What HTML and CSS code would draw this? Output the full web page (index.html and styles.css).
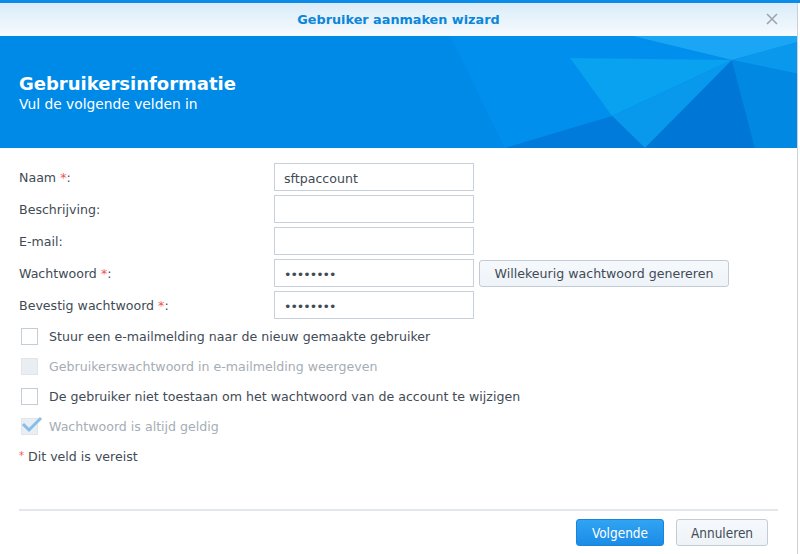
FILE: index.html
```html
<!DOCTYPE html>
<html lang="nl">
  <head>
    <meta charset="UTF-8" />
    <meta name="viewport" content="width=device-width, initial-scale=1.0" />
    <title>Gebruiker aanmaken wizard</title>
    <link rel="stylesheet" href="styles.css">
  </head>

  <body>
    <div class="window">
      <!-- balk bovenaan + titel -->
      <header class="titlebar">
        <span class="title">Gebruiker aanmaken wizard</span>
        <button class="close" type="button" aria-label="Sluiten">
          <svg width="12" height="12" viewBox="0 0 12 12">
            <path d="M1 1 L11 11 M11 1 L1 11" stroke="#9ea4aa" stroke-width="1.6" fill="none" />
          </svg>
        </button>
      </header>

      <section class="banner">
        <svg class="banner-bg" width="798" height="112" viewBox="0 0 798 112" preserveAspectRatio="none">
          <rect width="798" height="112" fill="#008ae8" />
          <polygon points="450,0 633,0 732,24 612,80 645,112 505,112" fill="#008fec" />
          <polygon points="633,0 798,0 798,6 732,24" fill="#1aa6f5" />
          <polygon points="570,22 732,24 612,80" fill="#08a2f1" />
          <polygon points="612,80 732,24 645,112" fill="#0898ec" />
          <polygon points="505,112 612,80 645,112" fill="#007bdb" />
          <polygon points="645,112 732,24 755,112" fill="#0077d6" />
          <polygon points="732,24 798,6 798,38" fill="#0a98ec" />
          <polygon points="732,24 798,38 798,112 755,112" fill="#0088e2" />
        </svg>
        <h1>Gebruikersinformatie</h1>
        <p>Vul de volgende velden in</p>
      </section>

      <main class="form">
        <div class="fields">
          <label for="naam">Naam <span class="req">*</span>:</label>
          <input id="naam" type="text" value="sftpaccount" />
          <span></span>

          <label for="beschrijving">Beschrijving:</label>
          <input id="beschrijving" type="text" />
          <span></span>

          <label for="email">E-mail:</label>
          <input id="email" type="text" />
          <span></span>

          <label for="ww">Wachtwoord <span class="req">*</span>:</label>
          <input id="ww" type="password" value="12345678" />
          <button class="btn" type="button">Willekeurig wachtwoord genereren</button>

          <label for="ww2">Bevestig wachtwoord <span class="req">*</span>:</label>
          <input id="ww2" type="password" value="12345678" />
          <span></span>
        </div>

        <ul class="checks">
          <li><span class="box"></span>Stuur een e-mailmelding naar de nieuw gemaakte gebruiker</li>
          <li class="disabled"><span class="box"></span>Gebruikerswachtwoord in e-mailmelding weergeven</li>
          <li><span class="box"></span>De gebruiker niet toestaan om het wachtwoord van de account te wijzigen</li>
          <li class="disabled">
            <span class="box">
              <svg width="22" height="18" viewBox="0 0 22 18">
                <path d="M2 9 L8 15 L20 3" stroke="#86bde9" stroke-width="3" fill="none" />
              </svg>
            </span>Wachtwoord is altijd geldig
          </li>
        </ul>

        <p class="note"><span class="req">*</span> Dit veld is vereist</p>
      </main>

      <footer class="footer">
        <button class="btn-primary" type="button">Volgende</button>
        <button class="btn-default" type="button">Annuleren</button>
      </footer>
    </div>
  </body>
</html>
```

FILE: styles.css
```css
html {
  box-sizing: border-box;
  font-family: "DejaVu Sans", Verdana, sans-serif;
  font-size: 12.6px;
}

*,
*:before,
*:after {
  box-sizing: inherit;
}

body {
  margin: 0;
  background: #ffffff;
  border-top: 3px solid #0a8ce8;
  color: #414b55;
}

.window {
  width: 798px;
  height: 551px;
  border-right: 1px solid #c9d0d7;
  display: flex;
  flex-direction: column;
}

/* cabecera de la ventana */
.titlebar {
  height: 33px;
  flex-shrink: 0;
  display: flex;
  align-items: center;
  justify-content: center;
  position: relative;
  background: linear-gradient(#d9ecf9, #f7fbfe);
}

.title {
  font-family: "DejaVu Sans", sans-serif;
  font-weight: bold;
  font-size: 12.8px;
  color: #0b86da;
}

.close {
  position: absolute;
  right: 19px;
  top: 10px;
  border: 0;
  padding: 0;
  background: none;
  line-height: 0;
}

.banner {
  height: 112px;
  flex-shrink: 0;
  position: relative;
  overflow: hidden;
  padding: 37px 19px 0;
  color: #ffffff;
}

.banner-bg {
  position: absolute;
  left: 0;
  top: 0;
  z-index: -1;
}

.banner h1 {
  margin: 0;
  font-family: "DejaVu Sans", sans-serif;
  font-size: 18px;
  font-weight: bold;
  line-height: 22px;
}

.banner p {
  margin: 0;
  font-family: "DejaVu Sans", sans-serif;
  font-size: 13.8px;
  line-height: 18px;
}

.form {
  flex-grow: 1;
  padding: 15px 19px 0;
}

.fields {
  display: grid;
  grid-template-columns: 250px 200px auto;
  grid-auto-rows: 28px;
  column-gap: 5px;
  row-gap: 4px;
  align-items: center;
}

.fields label {
  line-height: 26px;
  padding-top: 2px;
}

.fields input {
  height: 28px;
  width: 200px;
  margin: 0;
  border: 1px solid #c8d1da;
  padding: 2px 9px 0;
  font-family: "DejaVu Sans", sans-serif;
  font-size: 12.6px;
  color: #414b55;
  outline: none;
}

.fields input[type="password"] {
  letter-spacing: -1px;
}

.req {
  color: #f2534f;
}

.btn {
  justify-self: start;
  width: 250px;
  height: 27px;
  border: 1px solid #c3ccd6;
  border-radius: 3px;
  background: linear-gradient(#f6f9fc, #eef3f8);
  font-family: "DejaVu Sans", sans-serif;
  font-size: 12.6px;
  color: #414b55;
}

.checks {
  list-style: none;
  margin: 2px 0 0;
  padding: 0 0 0 2px;
}

.checks li {
  display: flex;
  align-items: center;
  height: 30px;
}

.box {
  width: 17px;
  height: 17px;
  border: 1px solid #c4ccd5;
  background: #ffffff;
  margin-right: 11px;
  position: relative;
}

.box svg {
  position: absolute;
  left: -1px;
  top: -4px;
}

.checks li.disabled {
  color: #a5adb5;
}

.checks li.disabled .box {
  background: #e9eef3;
  border-color: #dfe5ea;
}

.note {
  margin: 6px 0 0;
  line-height: 18px;
}

.note .req {
  font-size: 10px;
  vertical-align: 2px;
}

.footer {
  height: 45px;
  flex-shrink: 0;
  margin: 0 19px 0;
  border-top: 2px solid #e3e7eb;
  display: flex;
  justify-content: flex-end;
  align-items: flex-start;
  gap: 12px;
  padding: 8px 10px 0 0;
}

.btn-primary,
.btn-default {
  height: 27px;
  border-radius: 3px;
  font-family: "DejaVu Sans Condensed", "DejaVu Sans", sans-serif;
  font-size: 13.5px;
  padding: 0;
}

.btn-primary {
  width: 88px;
  border: 1px solid #1a84dc;
  background: linear-gradient(#31a4f3, #1a8ce6);
  color: #ffffff;
}

.btn-default {
  width: 92px;
  border: 1px solid #c3ccd6;
  background: linear-gradient(#f6f9fc, #eef3f8);
  color: #414b55;
}
```
